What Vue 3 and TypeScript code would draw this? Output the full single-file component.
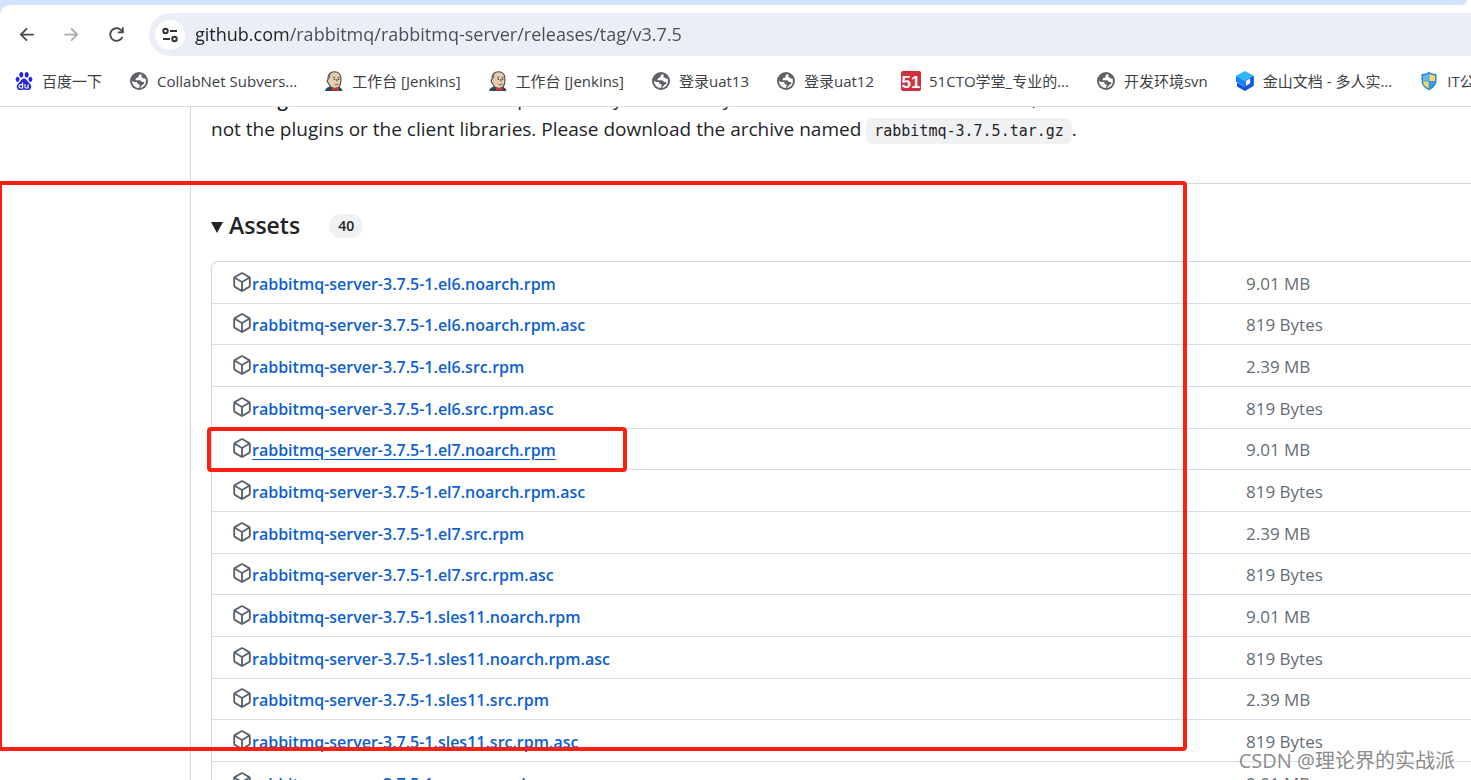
<script setup lang="ts">
import { ref } from 'vue'

type IconName = 'baidu' | 'globe' | 'jenkins' | 'cto' | 'kdocs' | 'shield'

interface Bookmark {
  icon: IconName
  label: string
}

interface Asset {
  name: string
  size: string
  hovered?: boolean
}

const address = ref('github.com/rabbitmq/rabbitmq-server/releases/tag/v3.7.5')

const bookmarks: Bookmark[] = [
  { icon: 'baidu', label: '百度一下' },
  { icon: 'globe', label: 'CollabNet Subvers...' },
  { icon: 'jenkins', label: '工作台 [Jenkins]' },
  { icon: 'jenkins', label: '工作台 [Jenkins]' },
  { icon: 'globe', label: '登录uat13' },
  { icon: 'globe', label: '登录uat12' },
  { icon: 'cto', label: '51CTO学堂_专业的...' },
  { icon: 'globe', label: '开发环境svn' },
  { icon: 'kdocs', label: '金山文档 - 多人实...' },
  { icon: 'shield', label: 'IT公告' },
]

const assets: Asset[] = [
  { name: 'rabbitmq-server-3.7.5-1.el6.noarch.rpm', size: '9.01 MB' },
  { name: 'rabbitmq-server-3.7.5-1.el6.noarch.rpm.asc', size: '819 Bytes' },
  { name: 'rabbitmq-server-3.7.5-1.el6.src.rpm', size: '2.39 MB' },
  { name: 'rabbitmq-server-3.7.5-1.el6.src.rpm.asc', size: '819 Bytes' },
  { name: 'rabbitmq-server-3.7.5-1.el7.noarch.rpm', size: '9.01 MB', hovered: true },
  { name: 'rabbitmq-server-3.7.5-1.el7.noarch.rpm.asc', size: '819 Bytes' },
  { name: 'rabbitmq-server-3.7.5-1.el7.src.rpm', size: '2.39 MB' },
  { name: 'rabbitmq-server-3.7.5-1.el7.src.rpm.asc', size: '819 Bytes' },
  { name: 'rabbitmq-server-3.7.5-1.sles11.noarch.rpm', size: '9.01 MB' },
  { name: 'rabbitmq-server-3.7.5-1.sles11.noarch.rpm.asc', size: '819 Bytes' },
  { name: 'rabbitmq-server-3.7.5-1.sles11.src.rpm', size: '2.39 MB' },
  { name: 'rabbitmq-server-3.7.5-1.sles11.src.rpm.asc', size: '819 Bytes' },
  { name: 'rabbitmq-server-3.7.5-1.suse.noarch.rpm', size: '9.01 MB' },
]
</script>

<template>
  <div class="window">
    <header class="chrome">
      <div class="tab-strip"></div>
      <div class="toolbar">
        <button class="nav" type="button" aria-label="Back">
          <svg viewBox="0 0 20 20"><path d="M17.5 9.500H3.500M10 2.700 3.200 9.500l6.800 6.800" /></svg>
        </button>
        <button class="nav dim" type="button" aria-label="Forward">
          <svg viewBox="0 0 20 20"><path d="M1.500 9.500h14M9 2.700l6.800 6.800L9 16.300" /></svg>
        </button>
        <button class="nav" type="button" aria-label="Reload">
          <svg viewBox="0 0 20 20"><path d="M16 12A7 7 0 1 1 14.500 4.600l1.800 1.900M16.500 1.500v5.500h-5.700" /></svg>
        </button>
        <div class="omnibox">
          <button class="site-info" type="button" aria-label="View site information">
            <svg viewBox="0 0 18 18">
              <circle cx="4.500" cy="5" r="2.200" />
              <path d="M9 5h7M2 13h7" />
              <circle cx="13.500" cy="13" r="2.200" />
            </svg>
          </button>
          <input v-model="address" class="address" type="text" aria-label="Address" spellcheck="false" />
        </div>
      </div>
      <nav class="bookmarks" aria-label="Bookmarks">
        <a v-for="(mark, i) in bookmarks" :key="i" class="bookmark" href="#">
          <svg v-if="mark.icon === 'baidu'" viewBox="0 0 20 20">
            <g fill="#2529d8">
              <ellipse cx="7.300" cy="3.800" rx="2" ry="2.800" />
              <ellipse cx="12.700" cy="3.800" rx="2" ry="2.800" />
              <ellipse cx="3.600" cy="8.300" rx="1.900" ry="2.600" />
              <ellipse cx="16.400" cy="8.300" rx="1.900" ry="2.600" />
              <path d="M10 7.500c2 0 2.600 1.600 4 3.200 1.700 1.700 3.600 3 3.200 5.600-.4 2.500-2.500 3-4.200 2.700-2-.3-4-.3-6 0-1.700.3-3.800-.2-4.200-2.700-.4-2.600 1.500-3.900 3.200-5.600 1.400-1.600 2-3.200 4-3.200z" />
            </g>
            <path d="M8.600 11.500v5.500H6.700a1.500 1.500 0 0 1 0-3.400h1.900M11 13.300v2.400c0 .9.400 1.300 1.200 1.300h1.900v-3.700" fill="none" stroke="#fff" stroke-width="1.200" />
          </svg>
          <svg v-else-if="mark.icon === 'globe'" viewBox="0 0 20 20">
            <circle cx="10" cy="10" r="9" fill="#5f6368" />
            <path d="M11.500 3.200c-1.500.5-2.200 1.300-2 2.300.1.900-.5 1.300-1.500 1.300-.9 0-.7 1.100-1.400 1.500-.5.500 0 1 .8 1h3.200c1.300 0 2 .7 2 1.700h1.600c1 0 1.400.7 1 1.600-.4.800-1.300.9-1.900 1.500-.6.800-1.300 1.800-2.500 2.700 3.700-.4 6.200-3.300 6.100-6.900 0-1-.2-1.900-.6-2.700-.9.500-2.100.4-2.600-.4-.4-.8-1.400-.6-1.400-1.500 0-.6.300-1 .7-1.400-.5-.3-1-.6-1.500-.7z" fill="#fff" />
            <path d="M3.100 9.700c.9 1 2 1.200 3.700 1.200 1.200 0 1.600.6 1.600 1.400 0 .8.700 1 1.500 1 .9 0 1 .8.700 1.600-.4.700-.5 1.300-.6 2C6 16.900 3 13.700 3.100 9.700z" fill="#fff" />
          </svg>
          <svg v-else-if="mark.icon === 'jenkins'" viewBox="0 0 20 20">
            <path d="M1.200 20c.2-3.200 2.600-4 5-4.600h7c3 .6 4.900 1.800 5.200 4.600z" fill="#2f4759" />
            <path d="M4 8.500C3.600 3.500 6.500.700 10.500.700s7 2.800 6.500 8c-.1 4.500-1.800 8.600-5.600 8.600-3 0-6-2-6.800-5-1.400-.5-1.900-2.800-.6-3.800z" fill="#e6cdae" stroke="#4d4a45" stroke-width="1.100" />
            <path d="M4.200 8.700c-.6-4 1.300-6.600 4-7.400-1.600 1.500-2.200 3-2.100 5.300z" fill="#77736c" />
            <path d="M9 6.500c.8-.5 1.600-.5 2.300 0M13.600 6.500c.7-.5 1.500-.4 2 .1M12.900 8v2.500M10.500 13.200c1.500.8 2.700.6 4-.2" fill="none" stroke="#5c4b3c" stroke-width="1" />
            <circle cx="10.400" cy="8.300" r=".8" fill="#333" />
            <circle cx="14.600" cy="8.300" r=".8" fill="#333" />
            <path d="m7.800 16.500 3.200 1 3.400-1.200V20l-3.400-1.100L8 20z" fill="#d33833" />
          </svg>
          <svg v-else-if="mark.icon === 'cto'" viewBox="0 0 20 20">
            <rect width="20" height="20" rx="2" fill="#d32f3c" />
            <text x="10" y="16.500" class="cto-text">51</text>
          </svg>
          <svg v-else-if="mark.icon === 'kdocs'" viewBox="0 0 20 20">
            <path d="m10 0 8.800 4.800-8.800 5.400L1 4.800z" fill="#31b7f5" />
            <path d="M1 4.800 10 10v5.500L1 10.800z" fill="#1583f2" />
            <path d="m10 10 8.800-5.200v10L10 20l-8-4.600v-4l8 4.400z" fill="#0a55e8" />
            <path d="m10.800 10 4.400-2.600v4.900l-4.400 2.600z" fill="#fff" />
          </svg>
          <svg v-else viewBox="0 0 20 20">
            <path d="M10 .800c2.200 1.500 4.700 2.200 7.500 2.300v6.300c0 4.700-3 7.700-7.500 9.800-4.500-2.100-7.500-5.100-7.500-9.800V3.100C5.300 3 7.800 2.300 10 .800z" fill="#2b8ad6" />
            <path d="M9.700 2.900v7H4V4.500c2-.2 4-.7 5.700-1.600z" fill="#60b9ef" />
            <path d="M10.300 2.900c1.700.9 3.700 1.400 5.700 1.600v5.400h-5.700z" fill="#f9d66a" />
            <path d="M4 10.400h5.700v7c-3.200-1.600-5.500-3.700-5.700-7z" fill="#f9d66a" />
            <path d="M16 10.400h-5.700v7c3.200-1.600 5.500-3.700 5.700-7z" fill="#3d9be2" />
          </svg>
          <span>{{ mark.label }}</span>
        </a>
      </nav>
    </header>

    <main class="page">
      <article class="release">
        <div class="notes">
          <p>
            <strong>Warning:</strong> The source code archive provided by GitHub only contains the source of the
            <a href="#">broker</a>,<br />not the plugins or the client libraries. Please download the archive named
            <code>rabbitmq-3.7.5.tar.gz</code>.
          </p>
        </div>
        <details class="assets" open>
          <summary>
            <svg class="caret" viewBox="0 0 12 14"><path d="M0 3h12L6 14z" /></svg>
            <h3>Assets</h3>
            <span class="count">40</span>
          </summary>
          <div class="frame">
            <table>
              <tbody>
                <tr v-for="asset in assets" :key="asset.name">
                  <td class="name">
                    <div class="entry">
                      <svg viewBox="0 0 16 16">
                        <path d="m8.878.392 5.250 3.045c.54.314.872.890.872 1.514v6.098a1.750 1.750 0 0 1-.872 1.514l-5.250 3.045a1.750 1.750 0 0 1-1.756 0l-5.250-3.045A1.750 1.750 0 0 1 1 11.049V4.951c0-.624.332-1.201.872-1.514L7.122.392a1.750 1.750 0 0 1 1.756 0ZM7.875 1.690l-4.630 2.685L8 7.133l4.755-2.758-4.630-2.685a.248.248 0 0 0-.250 0ZM2.500 5.677v5.372c0 .090.047.171.125.216l4.625 2.683V8.432Zm6.250 8.271 4.625-2.683a.250.250 0 0 0 .125-.216V5.677L8.750 8.432Z" />
                      </svg>
                      <a href="#" :class="{ hovered: asset.hovered }">{{ asset.name }}</a>
                      <span v-if="asset.hovered" class="mark-row"></span>
                    </div>
                  </td>
                  <td class="size">{{ asset.size }}</td>
                </tr>
              </tbody>
            </table>
          </div>
        </details>
      </article>
      <span class="mark-area"></span>
      <span class="watermark">CSDN @理论界的实战派</span>
    </main>
  </div>
</template>

<style>
body {
  margin: 0;
  overflow: hidden;
}
</style>

<style scoped>
.window {
  display: flex;
  flex-direction: column;
  height: 100vh;
  overflow: hidden;
  background: #fff;
  color: #1f2328;
  font-family: "Open Sans", "Noto Sans CJK SC", sans-serif;
}

.window * {
  box-sizing: border-box;
}

button {
  padding: 0;
  border: 0;
  background: none;
}

/* Browser frame */
.chrome {
  flex: none;
  border-bottom: 1px solid #dcdddf;
  background: linear-gradient(90deg, #d3e3fd 50%, #fff 50%);
}

.tab-strip {
  height: 5px;
  margin-right: 4px;
  border-bottom-right-radius: 12px;
  background: #d3e3fd;
}

.toolbar {
  display: flex;
  align-items: center;
  height: 59px;
  padding-left: 15px;
  border-top-left-radius: 10px;
  background: #fff;
}

.nav {
  display: grid;
  place-items: center;
  flex: none;
  width: 24px;
  height: 24px;
  margin-right: 21px;
}

.nav svg {
  width: 18px;
  height: 18px;
  fill: none;
  stroke: #45474a;
  stroke-width: 2;
}

.nav.dim svg {
  stroke: #a8a9ab;
}

.omnibox {
  display: flex;
  flex: 1;
  align-items: center;
  height: 43px;
  margin-left: -1px;
  padding-left: 6px;
  border-radius: 22px 0 0 22px;
  background: #ebeef7;
}

.site-info {
  display: grid;
  place-items: center;
  flex: none;
  width: 30px;
  height: 30px;
  border-radius: 50%;
  background: #fff;
}

.site-info svg {
  width: 18px;
  height: 18px;
  fill: none;
  stroke: #303134;
  stroke-width: 2;
}

.address {
  flex: 1;
  min-width: 0;
  height: 32px;
  margin-left: 10px;
  padding: 0 0 2px;
  border: 0;
  outline: 0;
  /* The host is darker than the path after it. */
  background: linear-gradient(90deg, #1f1f1f 95px, #4a4c50 95px) text;
  color: transparent;
  font: 18px "Open Sans", sans-serif;
}

.bookmarks {
  display: flex;
  gap: 27px;
  height: 42px;
  padding: 0 0 8px 14px;
  overflow: hidden;
  background: #fff;
}

.bookmark {
  display: flex;
  flex: none;
  align-items: center;
  gap: 8px;
  color: #3c4043;
  font-size: 15px;
  line-height: 22px;
  text-decoration: none;
  white-space: nowrap;
}

.bookmark svg {
  width: 20px;
  height: 20px;
}

.cto-text {
  fill: #fff;
  font: bold 17px "Liberation Sans", sans-serif;
  text-anchor: middle;
}

/* Release page */
.page {
  position: relative;
  flex: 1;
  min-height: 0;
  overflow: hidden;
}

.release {
  display: flow-root;
  margin-left: 190px;
  border-left: 1px solid #d0d7de;
}

.notes {
  display: flex;
  align-items: flex-end;
  height: 77px;
  padding: 0 0 39px 20px;
  border-bottom: 1px solid #d0d7de;
}

.notes p {
  margin: 0;
  font-size: 19px;
  line-height: 30px;
  white-space: nowrap;
}

.notes strong {
  font-weight: 600;
}

.notes a {
  color: #0969da;
  text-decoration: none;
}

.notes code {
  padding: 4px 8px;
  border-radius: 7px;
  background: #eff1f3;
  font: 15px "DejaVu Sans Mono", monospace;
}

.assets {
  padding-left: 20px;
}

summary {
  display: flex;
  align-items: center;
  height: 77px;
  padding-top: 6px;
  list-style: none;
}

.caret {
  width: 12px;
  height: 14px;
  margin-right: 6px;
  fill: #1f2328;
}

h3 {
  margin: 0;
  padding-bottom: 2px;
  font-size: 23px;
  font-weight: 600;
  line-height: 36px;
}

.count {
  margin-left: 29px;
  padding: 0 9px;
  border-radius: 12px;
  background: #eff1f3;
  font-size: 14px;
  font-weight: 600;
  line-height: 24px;
}

.frame {
  border: 1px solid #d0d7de;
  border-right: 0;
  border-top-left-radius: 7px;
}

table {
  width: 100%;
  border-spacing: 0;
  font-size: 17px;
  line-height: 26px;
}

tr {
  height: 42px;
}

tr:nth-child(3n + 2) {
  height: 41px;
}

td {
  padding: 2px 0 0;
  border-bottom: 1px solid #d8dee4;
}

.entry {
  position: relative;
  display: flex;
  align-items: center;
  padding-left: 20px;
}

.entry svg {
  width: 20px;
  height: 20px;
  margin-bottom: 4px;
  fill: #59636e;
}

.entry a {
  color: #0e5fd0;
  font-size: 16px;
  font-weight: 600;
  text-decoration: none;
}

.entry a.hovered {
  text-decoration: underline;
  text-underline-offset: 3px;
}

.size {
  width: 225px;
  color: #656d76;
}

/* Red highlight boxes */
.mark-area,
.mark-row {
  position: absolute;
  border: 4px solid #ff1f10;
  border-radius: 4px;
  pointer-events: none;
}

.mark-area {
  top: 74px;
  right: 284px;
  left: -2px;
  height: 570px;
}

.mark-row {
  top: -10px;
  left: -5px;
  width: 420px;
  height: 45px;
}

.watermark {
  position: absolute;
  right: 16px;
  bottom: 6px;
  color: #8c8c8c;
  font-size: 20px;
  line-height: 26px;
  text-shadow: 1px 1px 0 #fff;
}
</style>
